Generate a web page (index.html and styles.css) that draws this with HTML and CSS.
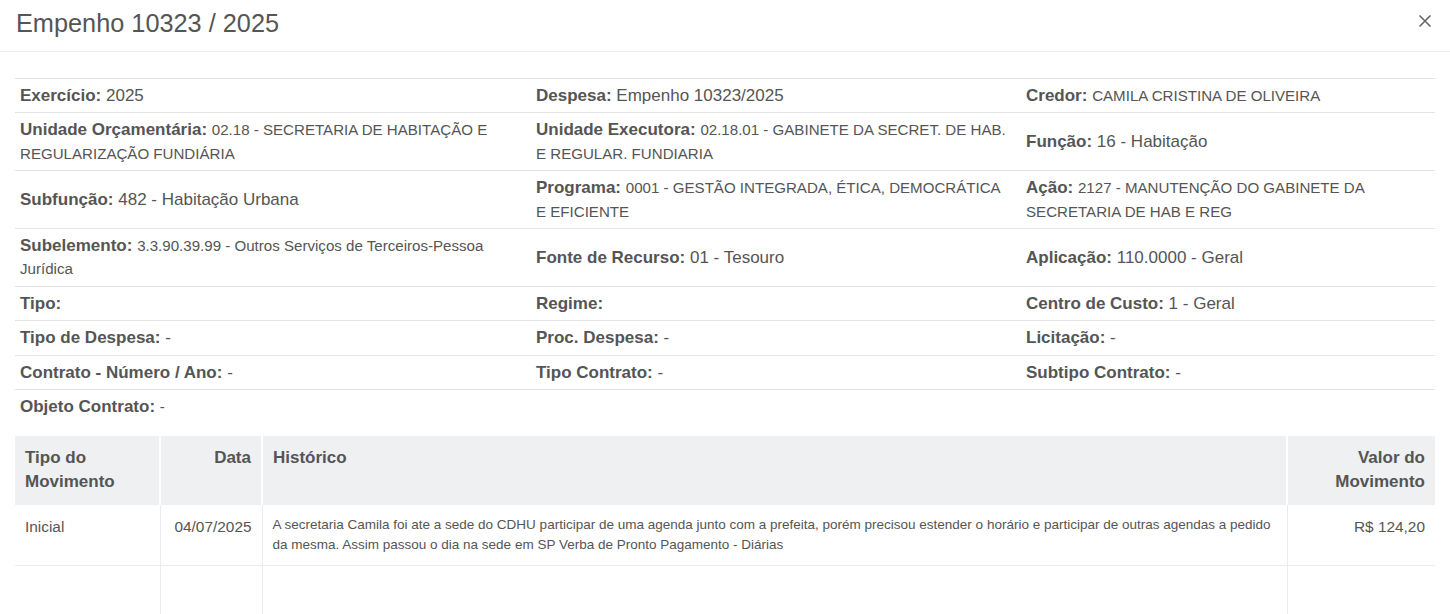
FILE: index.html
```html
<!DOCTYPE html>
<html lang="pt-BR">
<head>
  <meta charset="UTF-8" />
  <title>Empenho 10323 / 2025</title>
  <link rel="stylesheet" href="styles.css">
</head>
<body>

  <div class="modal">
    <div class="modal-header">
      <h4 class="modal-title">Empenho 10323 / 2025</h4>
      <button class="close" type="button" aria-label="Fechar">
        <svg width="14" height="14" viewBox="0 0 14 14"><path d="M1.5 1.5 12.5 12.5M12.5 1.5 1.5 12.5" stroke="#666" stroke-width="1.6" fill="none"/></svg>
      </button>
    </div>

    <div class="modal-body">
      <table class="info">
        <colgroup><col class="c1"><col class="c2"><col class="c3"></colgroup>
        <tr>
          <td><b>Exercício:</b> 2025</td>
          <td><b>Despesa:</b> Empenho 10323/2025</td>
          <td><b>Credor:</b> <small>CAMILA CRISTINA DE OLIVEIRA</small></td>
        </tr>
        <tr>
          <td><b>Unidade Orçamentária:</b> <small>02.18 - SECRETARIA DE HABITAÇÃO E REGULARIZAÇÃO FUNDIÁRIA</small></td>
          <td><b>Unidade Executora:</b> <small>02.18.01 - GABINETE DA SECRET. DE HAB. E REGULAR. FUNDIARIA</small></td>
          <td><b>Função:</b> 16 - Habitação</td>
        </tr>
        <tr>
          <td><b>Subfunção:</b> 482 - Habitação Urbana</td>
          <td><b>Programa:</b> <small>0001 - GESTÃO INTEGRADA, ÉTICA, DEMOCRÁTICA E EFICIENTE</small></td>
          <td><b>Ação:</b> <small>2127 - MANUTENÇÃO DO GABINETE DA SECRETARIA DE HAB E REG</small></td>
        </tr>
        <tr>
          <td><b>Subelemento:</b> <small>3.3.90.39.99 - Outros Serviços de Terceiros-Pessoa Jurídica</small></td>
          <td><b>Fonte de Recurso:</b> 01 - Tesouro</td>
          <td><b>Aplicação:</b> 110.0000 - Geral</td>
        </tr>
        <tr>
          <td><b>Tipo:</b></td>
          <td><b>Regime:</b></td>
          <td><b>Centro de Custo:</b> 1 - Geral</td>
        </tr>
        <tr>
          <td><b>Tipo de Despesa:</b> -</td>
          <td><b>Proc. Despesa:</b> -</td>
          <td><b>Licitação:</b> -</td>
        </tr>
        <tr>
          <td><b>Contrato - Número / Ano:</b> -</td>
          <td><b>Tipo Contrato:</b> -</td>
          <td><b>Subtipo Contrato:</b> -</td>
        </tr>
        <tr>
          <td><b>Objeto Contrato:</b> <small>-</small></td>
          <td></td>
          <td></td>
        </tr>
      </table>

      <table class="movs">
        <colgroup><col class="m1"><col class="m2"><col class="m3"><col class="m4"></colgroup>
        <thead>
          <tr>
            <th>Tipo do Movimento</th>
            <th class="right">Data</th>
            <th>Histórico</th>
            <th class="right">Valor do Movimento</th>
          </tr>
        </thead>
        <tbody>
          <tr>
            <td>Inicial</td>
            <td class="right">04/07/2025</td>
            <td><div class="hist">A secretaria Camila foi ate a sede do CDHU participar de uma agenda junto com a prefeita, porém precisou estender o horário e participar de outras agendas a pedido da mesma. Assim passou o dia na sede em SP Verba de Pronto Pagamento - Diárias</div></td>
            <td class="right">R$ 124,20</td>
          </tr>
          <tr class="empty">
            <td></td><td></td><td></td><td></td>
          </tr>
        </tbody>
      </table>
    </div>
  </div>

</body>
</html>
```

FILE: styles.css
```css
*{box-sizing:border-box;margin:0;padding:0}
body{
  background:#fff;
  color:#555;
  font-family:"Liberation Sans",Arial,Helvetica,sans-serif;
  font-size:17px;
  line-height:24px;
  overflow:hidden;
}

/* ---------- header ---------- */
.modal-header{
  height:52px;
  padding:0 17px 0 16px;
  display:flex;
  align-items:center;
  justify-content:space-between;
  border-bottom:1px solid #ececec;
}
.modal-title{font-size:25.3px;font-weight:400;color:#555;margin-top:-6px}
.close{
  background:none;
  border:none;
  width:16px;
  height:16px;
  display:flex;
  align-items:center;
  justify-content:center;
  margin-top:-9px;
  cursor:pointer;
}

/* ---------- info grid ---------- */
.modal-body{padding:26px 15px 0}
table{border-collapse:collapse;table-layout:fixed;width:1420px}
.info .c1{width:516px}
.info .c2{width:490px}
.info .c3{width:414px}
.info td{
  padding:5px 10px 5px 5px;
  line-height:23.4px;
  border-top:1px solid #e2e2e2;
  vertical-align:middle;
}
.info b{font-weight:700}
.info small{font-size:15.1px}

/* ---------- movements ---------- */
.movs{margin-top:13px}
.movs .m1{width:145px}
.movs .m2{width:102px}
.movs .m3{width:1025px}
.movs .m4{width:148px}
.movs th{
  background:#eef0f2;
  font-weight:700;
  text-align:left;
  padding:10px;
  vertical-align:top;
  border-left:2px solid #fff;
  border-right:2px solid #fff;
  border-bottom:1px solid #f0f0f0;
}
.movs th:first-child{border-left:none}
.movs th:last-child{border-right:none}
.movs td{
  font-size:15.4px;
  padding:10px;
  vertical-align:top;
  border:1px solid #ececec;
  border-top:none;
}
.movs td:first-child{border-left:none}
.movs td:last-child{border-right:none}
.movs .right{text-align:right}
.hist{font-size:13.5px;line-height:20px}
.empty td{height:60px}
```
